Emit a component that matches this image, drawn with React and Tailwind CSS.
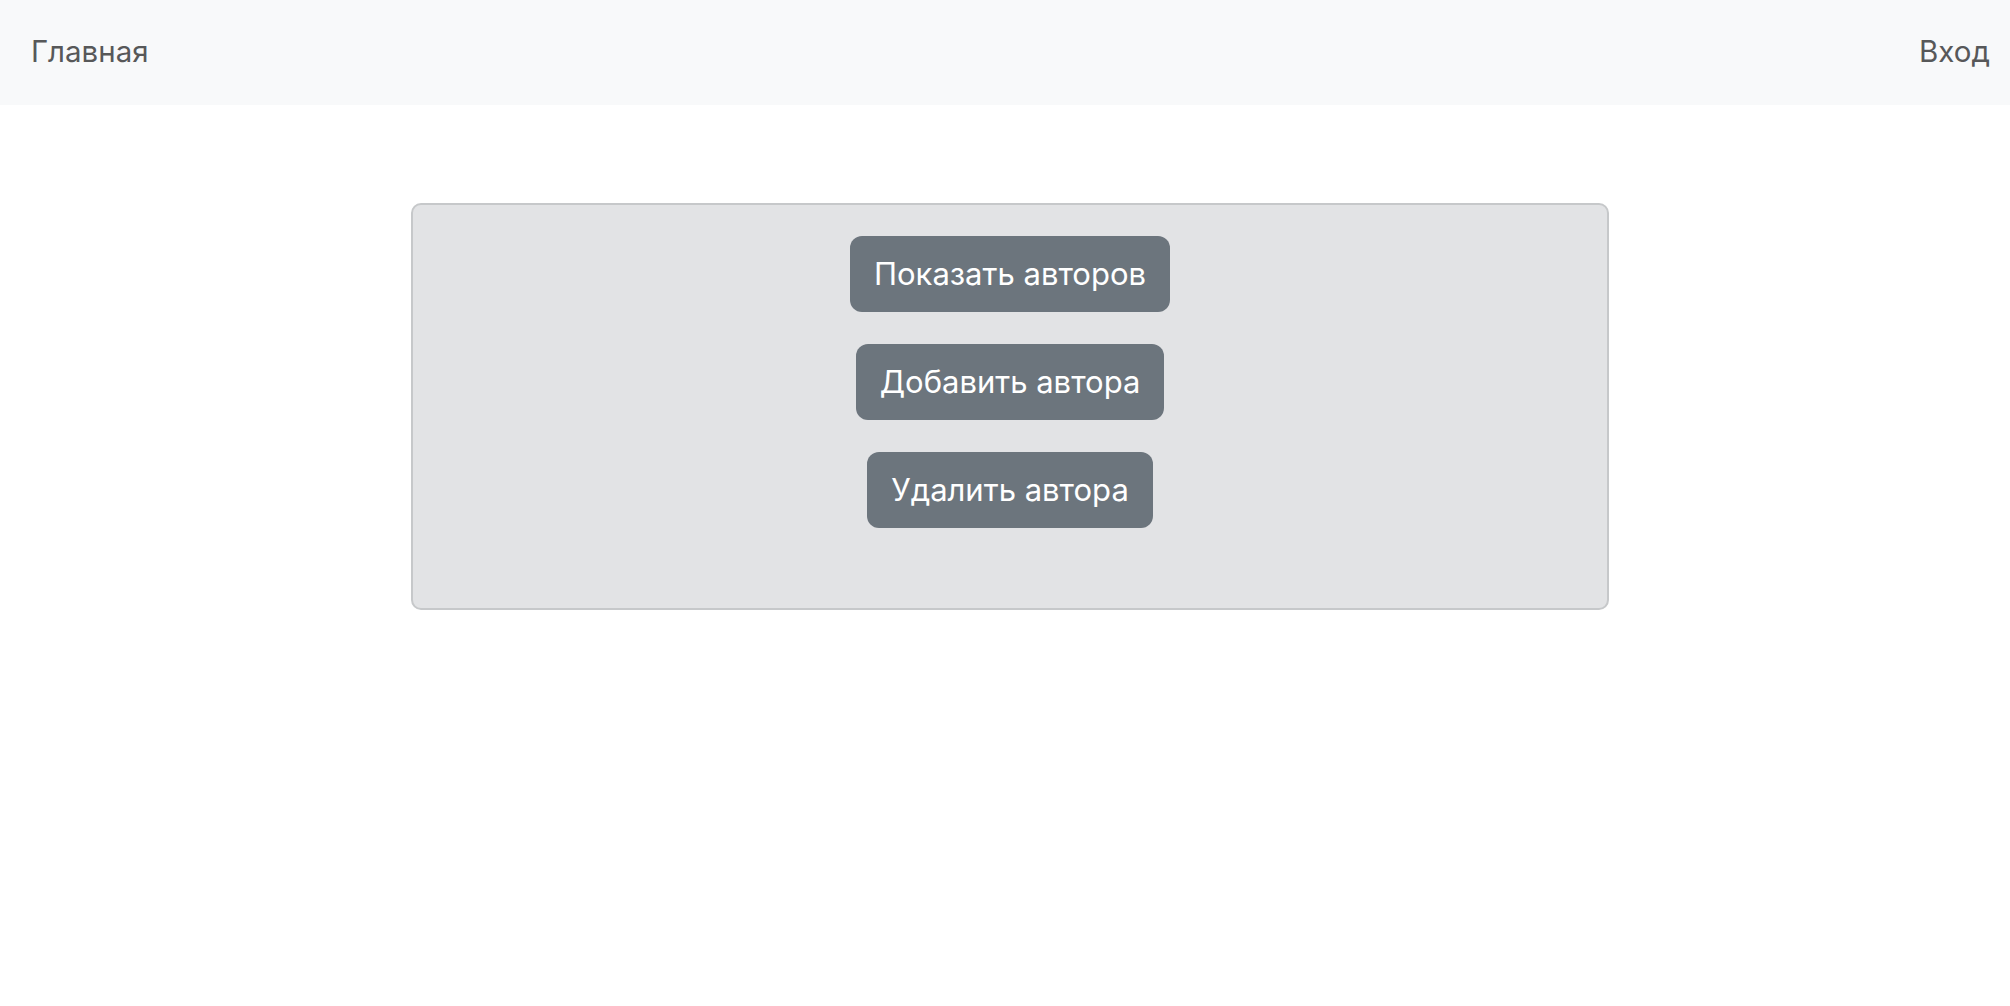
export default function App() {
  const actions = ["Показать авторов", "Добавить автора", "Удалить автора"];

  return (
    <div className="min-h-screen bg-white" style={{ fontFamily: "Inter, 'Noto Sans', sans-serif" }}>
      {/* Navbar */}
      <nav className="flex h-[105px] items-center justify-between bg-[#f8f9fa] pl-[31px] pr-[20px] pb-[2px]">
        <a href="#" className="text-[29.5px] text-[#575859]">Главная</a>
        <a href="#" className="text-[29.5px] text-[#575859]">Вход</a>
      </nav>

      <div className="flex justify-center pt-[98px] pl-[10px]">
        <div className="flex w-[1198px] flex-col items-center gap-[32px] rounded-[10px] border-2 border-[#c6c8ca] bg-[#e2e3e5] pt-[31px] pb-[80px]">
          {actions.map((label) => (
            <button
              key={label}
              className="h-[76px] rounded-[12px] bg-[#6c757d] px-[24px] text-[31px] text-white"
            >
              {label}
            </button>
          ))}
        </div>
      </div>
    </div>
  );
}
